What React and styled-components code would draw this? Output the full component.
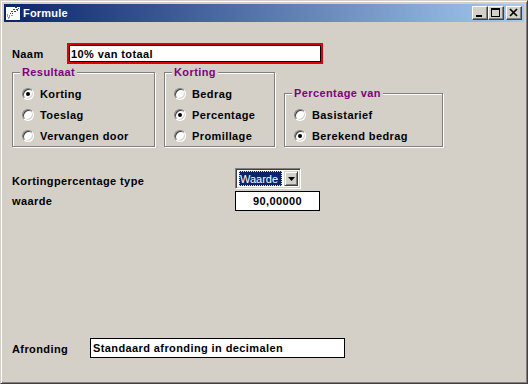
import React from 'react';
import styled, { createGlobalStyle } from 'styled-components';

const Global = createGlobalStyle`
    * { box-sizing: border-box; }
    body {
        margin: 0;
        background: #d4d0c8;
    }
`

const Window = styled.div`
    width: 528px;
    height: 384px;
    display: flex;
    flex-direction: column;
    background: #d4d0c8;
    border: 1px solid;
    border-color: #d4d0c8 #404040 #404040 #d4d0c8;
    box-shadow: inset 1px 1px #fff, inset -1px -1px #808080;
    padding: 3px;
`

const TitleBar = styled.div`
    height: 18px;
    flex: none;
    display: flex;
    align-items: center;
    padding: 0 2px 0 1px;
    background: linear-gradient(90deg, #0a246a, #a6caf0);
    color: #fff;
    font: bold 11px "Liberation Sans", Arial, sans-serif;
    letter-spacing: 0.2px;
`

const Title = styled.span`
    flex: 1;
    margin-left: 2px;
`

const CtrlButton = styled.div`
    width: 16px;
    height: 14px;
    margin-left: ${props => props.$gap}px;
    display: flex;
    align-items: center;
    justify-content: center;
    background: #d4d0c8;
    border: 1px solid;
    border-color: #fff #404040 #404040 #fff;
    box-shadow: inset -1px -1px #808080;
`

const Client = styled.div`
    flex: 1;
    display: flex;
    flex-direction: column;
    padding-left: 8px;
    font-family: "Liberation Sans", Arial, sans-serif;
    font-size: 11px;
    font-weight: bold;
    letter-spacing: 0.4px;
    color: #000;
`

const FieldRow = styled.div`
    display: flex;
    align-items: center;
    margin-top: ${props => props.$top || 0}px;
    margin-bottom: ${props => props.$bottom || 0}px;
`

const BottomRow = styled(FieldRow)`
    margin-top: auto;
`

const Label = styled.span`
    width: ${props => props.$w}px;
    flex: none;
    padding-top: ${props => props.$drop || 0}px;
`

const TextBox = styled.div`
    width: ${props => props.$w}px;
    height: ${props => props.$h || 20}px;
    display: flex;
    align-items: center;
    justify-content: ${props => props.$center ? 'center' : 'flex-start'};
    padding-left: ${props => props.$center ? 0 : 2}px;
    background: #fff;
    border: ${props => props.$focus ? '2px solid #e00000' : '1px solid #000'};
    box-shadow: ${props => props.$focus ? 'inset 0 0 0 1px #000' : 'none'};
    white-space: nowrap;
`

const GroupRow = styled.div`
    display: flex;
    align-items: flex-start;
    gap: 9px;
    margin-top: 2px;
`

const Group = styled.fieldset`
    width: ${props => props.$w}px;
    margin: ${props => props.$top || 0}px 0 0 0;
    padding: 4px 0 0 9px;
    border: 1px solid #808080;
    box-shadow: 1px 1px 0 #fff, inset 1px 1px 0 #fff;
`

const Legend = styled.legend`
    padding: 0 2px;
    margin-left: -2px;
    line-height: 13px;
    color: #800080;
    background: #d4d0c8;
`

const RadioRow = styled.label`
    height: 21px;
    display: flex;
    align-items: center;
    gap: 6px;
`

const RadioDot = styled.span`
    width: 12px;
    height: 12px;
    flex: none;
    border-radius: 50%;
    background: #fff;
    border: 1px solid;
    border-color: #808080 #fff #fff #808080;
    box-shadow: inset 1px 1px #404040, inset -1px -1px #d4d0c8;
    display: flex;
    align-items: center;
    justify-content: center;

    &::after {
        content: "";
        width: 4px;
        height: 4px;
        border-radius: 50%;
        background: ${props => props.$on ? '#000' : 'transparent'};
    }
`

const Combo = styled.div`
    width: 66px;
    height: 21px;
    display: flex;
    align-items: stretch;
    background: #fff;
    border: 1px solid;
    border-color: #808080 #fff #fff #808080;
    box-shadow: inset 1px 1px #404040, inset -1px -1px #d4d0c8;
    padding: 2px;
`

const ComboValue = styled.span`
    flex: 1;
    margin: 0 2px 0 1px;
    background: #0a246a;
    color: #fff;
    font-weight: normal;
    letter-spacing: 0;
    outline: 1px dotted #e8e890;
    outline-offset: -1px;
    display: flex;
    align-items: center;
    padding-left: 1px;
`

const ComboArrow = styled.span`
    width: 14px;
    flex: none;
    display: flex;
    align-items: center;
    justify-content: center;
    background: #d4d0c8;
    border: 1px solid;
    border-color: #d4d0c8 #404040 #404040 #d4d0c8;
    box-shadow: inset 1px 1px #fff, inset -1px -1px #808080;
`

const Radio = ({ on, children }) => (
    <RadioRow>
        <RadioDot $on={on} />
        {children}
    </RadioRow>
)

const AppIcon = () => (
    <svg width="16" height="16" viewBox="0 0 16 16">
        <rect x="1" y="2" width="14" height="13" fill="#fff" />
        <g fill="#1c3fd0">
            <rect x="10" y="2" width="2" height="1" />
            <rect x="13" y="3" width="1" height="1" />
            <rect x="8" y="4" width="2" height="1" />
            <rect x="11" y="4" width="2" height="1" />
            <rect x="6" y="6" width="2" height="1" />
            <rect x="9" y="6" width="2" height="1" />
            <rect x="12" y="5" width="1" height="1" />
            <rect x="5" y="8" width="1" height="1" />
            <rect x="7" y="8" width="1" height="1" />
        </g>
        <g fill="#9a9a9a">
            <rect x="2" y="9" width="1" height="3" />
            <rect x="4" y="10" width="1" height="2" />
            <rect x="3" y="12" width="2" height="1" />
            <rect x="3" y="13" width="1" height="1" />
            <rect x="6" y="10" width="2" height="1" />
        </g>
    </svg>
)

const App = () => {
    return (
        <>
            <Global />
            <Window>
                <TitleBar>
                    <AppIcon />
                    <Title>Formule</Title>
                    <CtrlButton>
                        <svg width="14" height="12" viewBox="0 0 14 12">
                            <rect x="3" y="8" width="6" height="2" fill="#000" />
                        </svg>
                    </CtrlButton>
                    <CtrlButton>
                        <svg width="14" height="12" viewBox="0 0 14 12">
                            <rect x="2.5" y="1.5" width="8" height="8" fill="none" stroke="#000" />
                            <rect x="2" y="1" width="9" height="2" fill="#000" />
                        </svg>
                    </CtrlButton>
                    <CtrlButton $gap={2}>
                        <svg width="14" height="12" viewBox="0 0 14 12">
                            <path d="M3 2 L10 9 M10 2 L3 9" stroke="#000" strokeWidth="1.7" />
                        </svg>
                    </CtrlButton>
                </TitleBar>
                <Client>
                    <FieldRow $top={21}>
                        <Label $w={55} $drop={1}>Naam</Label>
                        <TextBox $w={256} $h={21} $focus>10% van totaal</TextBox>
                    </FieldRow>
                    <GroupRow>
                        <Group $w={143}>
                            <Legend>Resultaat</Legend>
                            <Radio on>Korting</Radio>
                            <Radio>Toeslag</Radio>
                            <Radio>Vervangen door</Radio>
                        </Group>
                        <Group $w={111}>
                            <Legend>Korting</Legend>
                            <Radio>Bedrag</Radio>
                            <Radio on>Percentage</Radio>
                            <Radio>Promillage</Radio>
                        </Group>
                        <Group $w={159} $top={21}>
                            <Legend>Percentage van</Legend>
                            <Radio>Basistarief</Radio>
                            <Radio on>Berekend bedrag</Radio>
                        </Group>
                    </GroupRow>
                    <FieldRow $top={21}>
                        <Label $w={223} $drop={4}>Kortingpercentage type</Label>
                        <Combo>
                            <ComboValue>Waarde</ComboValue>
                            <ComboArrow>
                                <svg width="7" height="4" viewBox="0 0 7 4">
                                    <path d="M0 0 H7 L3.5 4 Z" fill="#000" />
                                </svg>
                            </ComboArrow>
                        </Combo>
                    </FieldRow>
                    <FieldRow $top={2}>
                        <Label $w={223}>waarde</Label>
                        <TextBox $w={85} $center>90,00000</TextBox>
                    </FieldRow>
                    <BottomRow $bottom={22}>
                        <Label $w={78} $drop={1}>Afronding</Label>
                        <TextBox $w={255}>Standaard afronding in decimalen</TextBox>
                    </BottomRow>
                </Client>
            </Window>
        </>
    );
};

export default App;
